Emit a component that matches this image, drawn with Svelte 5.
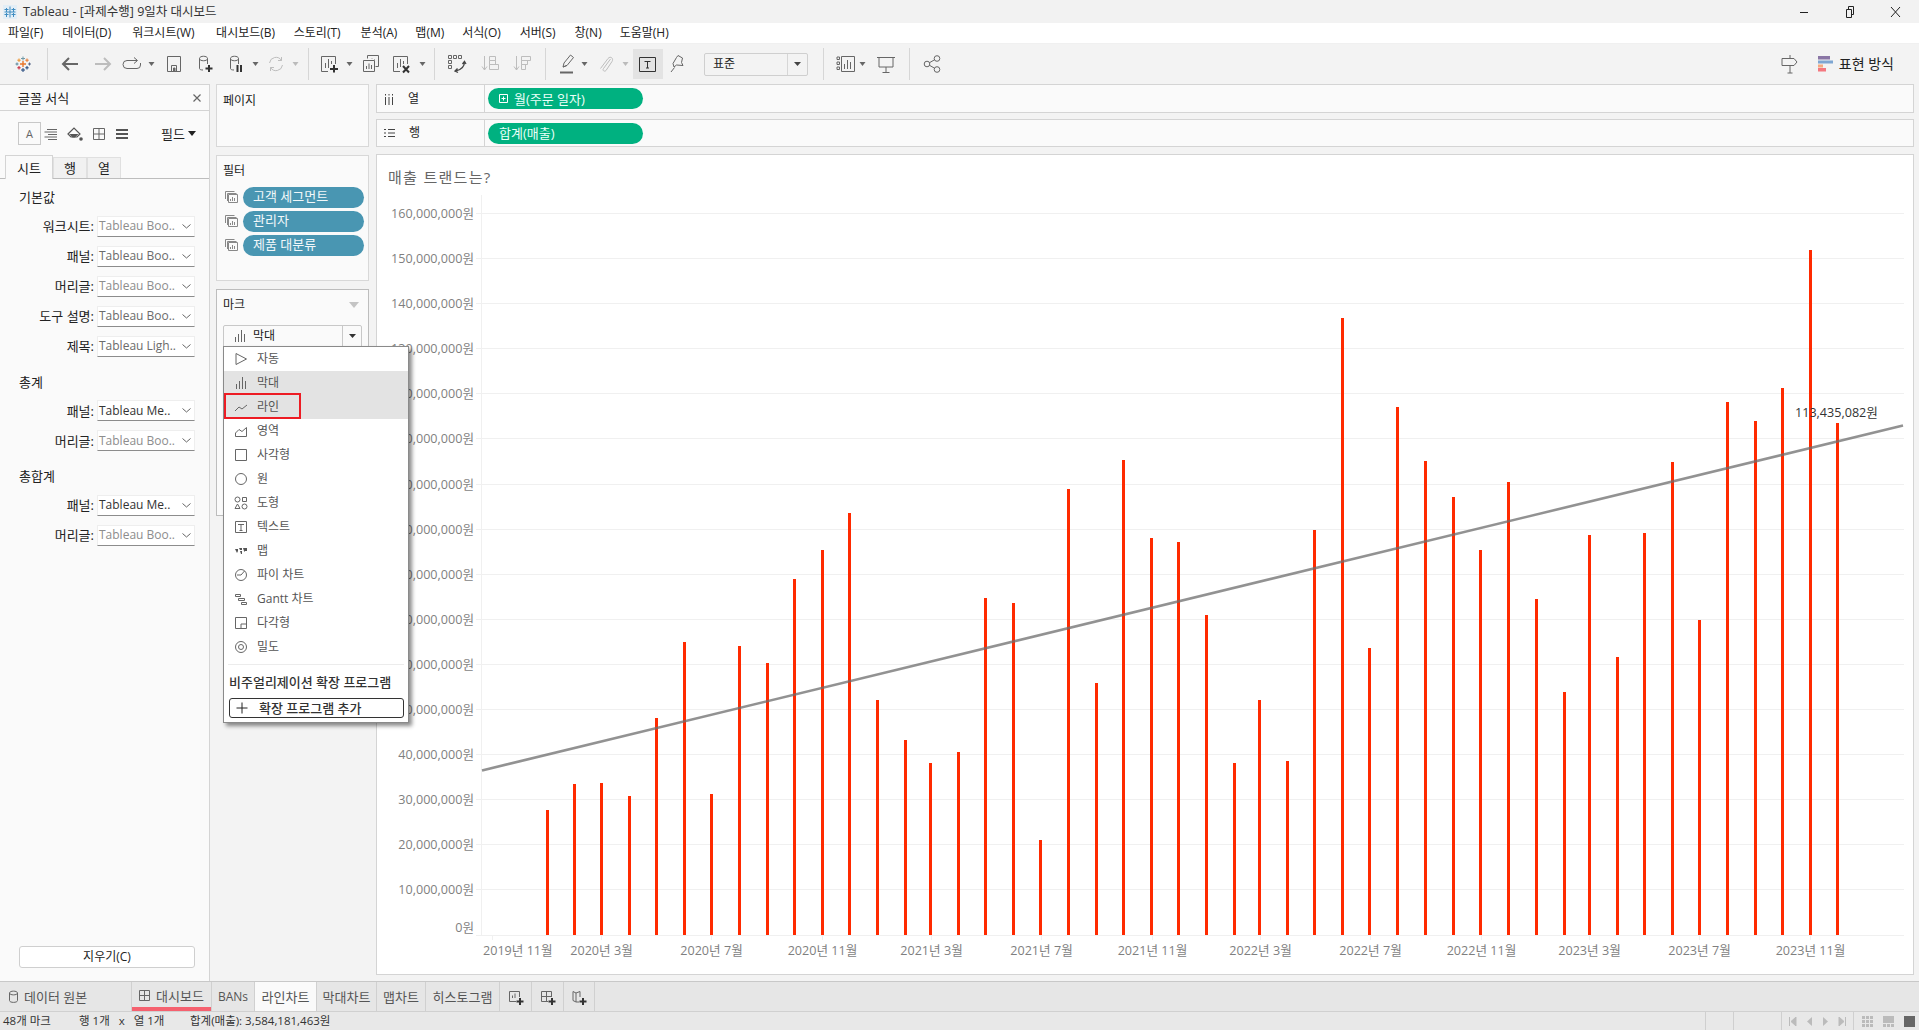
<script>
  const menus = ['파일(F)','데이터(D)','워크시트(W)','대시보드(B)','스토리(T)','분석(A)','맵(M)','서식(O)','서버(S)','창(N)','도움말(H)'];

  // Bar tops of the monthly sales series, Jan 2020 .. Dec 2023 (y in page px)
  const tops = [662,641,640,651,587,525,649,528,542,473,450,419,572,605,624,615,489,493,687,400,558,376,440,443,503,624,572,622,433,260,530,333,377,406,450,394,490,566,437,537,436,378,507,329,344,317,204,346].map(t => t * 1.2233);
  const BASE = 935, PXM = 45.1;
  const dayX = (y, m) => 548 + ((Date.UTC(y, m, 1) - Date.UTC(2020, 0, 1)) / 864e5) * 0.9024;
  const bars = tops.map((t, i) => ({ x: Math.round(dayX(2020 + Math.floor(i / 12), i % 12) - 1.5), y: Math.round(t) }));
  const yTicks = Array.from({ length: 17 }, (_, i) => i).map(i => ({
    y: Math.floor(BASE - i * PXM) + 0.5,
    label: (i * 10000000).toLocaleString('en-US') + '원',
    zero: i === 0
  }));
  const xTicks = [];
  for (let k = 0; k < 13; k++) {
    const mIdx = 10 + k * 4;
    const yr = 2019 + Math.floor(mIdx / 12), mo = mIdx % 12;
    xTicks.push({ x: Math.round(dayX(yr, mo)) + 0.5, label: `${yr}년 ${mo + 1}월` });
  }

  const fmtRows1 = [['워크시트:','Tableau Boo..',0],['패널:','Tableau Boo..',1],['머리글:','Tableau Boo..',0],['도구 설명:','Tableau Boo..',1],['제목:','Tableau Ligh..',1]];
  const fmtRows2 = [['패널:','Tableau Me..',2],['머리글:','Tableau Boo..',0]];

  const toolDefs = () => [
    [23,20,iLogo],[47,1,null],[70,20,iBack],[103,20,iFwd],[131.6,22,iRedo],[152,7,iCaret],[174,20,iSave],
    [205,20,iDbPlus],[236,20,iDbPause],[256,7,iCaret],[275.6,20,iRefresh],[296,7,iCaretL],[309,1,null],
    [329,20,iSheetPlus],[350,7,iCaret],[371,20,iDup],[401,20,iSheetX],[422.5,7,iCaret],[435,1,null],
    [457,20,iSwap],[490,20,iSortA],[522,20,iSortD],[545.6,1,null],[567,20,iPen],[585,7,iCaret],[606,20,iClip],[626,7,iCaretL],
    [648,30,iT],[677,20,iPin]
  ];
  const toolDefs2 = () => [[823.6,1,null],[846,20,iShowMe],[863,7,iCaret],[886,20,iPresent],[910,1,null],[932,20,iShare]];
  function place(list, start) {
    let right = start;
    return list.map(([c, w, icon]) => {
      const ml = c - w / 2 - right;
      right = c + w / 2;
      return { ml, w, icon };
    });
  }
  const tools = place(toolDefs(), 0);
  const tools2 = place(toolDefs2(), 808);
</script>

{#snippet iLogo()}
  <svg width="20" height="20" viewBox="0 0 20 20">
    <path d="M10 7v6M7 10h6" stroke="#e8762b" stroke-width="1.400"/>
    <path d="M10 2.500v4M8 4.500h4" stroke="#7199a6"/>
    <path d="M10 14v4M8 16h4" stroke="#1f447b"/>
    <path d="M4 8.500v3M2.500 10h3" stroke="#5b879b"/>
    <path d="M16.500 8.500v3M15 10h3" stroke="#5a6b8c"/>
    <path d="M6 4.500v3.500M4.300 6.200h3.400" stroke="#eb912b"/>
    <path d="M14 4.500v3.500M12.300 6.200h3.400" stroke="#e8762b"/>
    <path d="M6 12v3.500M4.300 13.800h3.400" stroke="#c72035"/>
    <path d="M14 12v3.500M12.300 13.800h3.400" stroke="#1f447b"/>
  </svg>
{/snippet}
{#snippet iBack()}<svg width="20" height="20" viewBox="0 0 20 20" class="st2"><path d="M18 10H3M9 4l-6 6 6 6"/></svg>{/snippet}
{#snippet iFwd()}<svg width="20" height="20" viewBox="0 0 20 20" class="st2 off"><path d="M2 10h15M11 4l6 6-6 6"/></svg>{/snippet}
{#snippet iRedo()}<svg width="22" height="20" viewBox="0 0 22 20" class="st"><path d="M16 6.500H6a3.500 3.500 0 0 0 0 8h10a3.500 3.500 0 0 0 3.500-3.500V9"/><path d="M13 3.500l3.500 3-3.500 3"/></svg>{/snippet}
{#snippet iCaret()}<svg width="7" height="4" viewBox="0 0 7 4"><path d="M0.500 0h6L3.500 4z" fill="#666"/></svg>{/snippet}
{#snippet iCaretL()}<svg width="7" height="4" viewBox="0 0 7 4"><path d="M0.500 0h6L3.500 4z" fill="#bbb"/></svg>{/snippet}
{#snippet iSave()}<svg width="20" height="20" viewBox="0 0 20 20" class="st"><path d="M3.500 2.500h13v15h-13z"/><path d="M7.500 17v-5.500h5V17"/><path d="M9.500 14h1.500v3h-1.500z" fill="#666"/></svg>{/snippet}
{#snippet iDbPlus()}<svg width="20" height="20" viewBox="0 0 20 20" class="st"><path d="M4.500 4.500v10c0 1 1.500 1.500 3.500 1.500M4.500 4.500c0-3 8-3 8 0s-8 3-8 0M12.500 4.500V10"/><path d="M14 11v7M10.500 14.500h7" class="dk"/></svg>{/snippet}
{#snippet iDbPause()}<svg width="20" height="20" viewBox="0 0 20 20" class="st"><path d="M4.500 4.500v10c0 1 1.500 1.500 3.500 1.500M4.500 4.500c0-3 8-3 8 0s-8 3-8 0M12.500 4.500V10"/><path d="M11.500 11v7M15 11v7" class="dk"/></svg>{/snippet}
{#snippet iRefresh()}<svg width="20" height="20" viewBox="0 0 20 20" class="st off"><path d="M3.500 9a6.500 6.500 0 0 1 12-2.500M16.500 11a6.500 6.500 0 0 1-12 2.500"/><path d="M15.500 3v3.500H12M4.500 17v-3.500H8"/></svg>{/snippet}
{#snippet iSheetPlus()}<svg width="20" height="20" viewBox="0 0 20 20" class="st"><path d="M9 17.500H2.500v-15h14V10"/><path d="M6.500 14V9M9.500 14V5M12.500 10V7" /><path d="M15 11v7.500M11 15h8" class="dk"/></svg>{/snippet}
{#snippet iDup()}<svg width="20" height="20" viewBox="0 0 20 20" class="st"><path d="M6.500 4.500V1.500h11v11h-3"/><path d="M2.500 6.500h11v11h-11z"/><path d="M5.500 15v-3M8 15V9.500M10.500 15v-4M11 4.500V4M13.500 5.500V5" /></svg>{/snippet}
{#snippet iSheetX()}<svg width="20" height="20" viewBox="0 0 20 20" class="st"><path d="M9 17.500H2.500v-15h14V10"/><path d="M6.500 14V9M9.500 13V5M12.500 10V7"/><path d="M12 12l6 6.500M18 12l-6 6.500" class="dk"/></svg>{/snippet}
{#snippet iSwap()}<svg width="20" height="20" viewBox="0 0 20 20" class="st"><path d="M1.500 1.500h3v3h-3zM6.500 1.500h3v3h-3zM11.500 1.500h3v3h-3zM1.500 6.500h3v3h-3zM1.500 11.500h3v3h-3z"/><path d="M17.500 8c0 4-2 7.500-9 9M15.500 10l2-2.500 1.500 2.500M10.500 14.500l-2.500 2.500 3 1.500" class="md"/></svg>{/snippet}
{#snippet iSortA()}<svg width="20" height="20" viewBox="0 0 20 20" class="st off"><path d="M4.500 2v14M2 12.500l2.500 3.500 2.500-3.500" /><path d="M9.500 2.500h6v4h-6zM9.500 6.500h6v4h-6zM9.500 10.500h9v5h-9z"/></svg>{/snippet}
{#snippet iSortD()}<svg width="20" height="20" viewBox="0 0 20 20" class="st off"><path d="M4.500 2v14M2 12.500l2.500 3.500 2.500-3.500"/><path d="M9.500 2.500h9v4h-9zM9.500 6.500h6v4h-6zM9.500 10.500h4v5h-4z"/></svg>{/snippet}
{#snippet iPen()}<svg width="20" height="22" viewBox="0 0 20 22" class="st"><path d="M6 14l1-4 6.500-8 3 2.500-6.500 8z"/><path d="M6 14l4-1.700"/><path d="M3 18.500h13v2H3z" fill="#666" stroke="none"/></svg>{/snippet}
{#snippet iClip()}<svg width="20" height="20" viewBox="0 0 20 20" class="st off"><path d="M14.500 5l-7 9.500c-1.500 2 1 3.500 2.500 2l6-9c2-3-1.500-6-4-3l-7.500 10"/></svg>{/snippet}
{#snippet iT()}<span class="tbtn"><svg width="17" height="15" viewBox="0 0 17 15" class="st dkst"><path d="M0.500 0.500h16v14h-16z"/><path d="M5.500 4.500h6M8.500 4.500v6.500M7 11h3"/></svg></span>{/snippet}
{#snippet iPin()}<svg width="20" height="20" viewBox="0 0 20 20" class="st"><path d="M11 1.500l4.500 2.500-1 4.500 1.500 3-6.500-.5-2.500 2-1-3.500 3.500-6z"/><path d="M7.500 13.500L4 18"/></svg>{/snippet}
{#snippet iShowMe()}<svg width="20" height="20" viewBox="0 0 20 20" class="st"><path d="M5.500 2.500h13v15h-13z"/><path d="M8.500 15v-5M11.500 15V6M14.500 15v-7" class="th"/><path d="M1 3h2.500v2.500H1zM1 8h2.500v2.500H1zM1 13h2.500v2.500H1z"/></svg>{/snippet}
{#snippet iPresent()}<svg width="20" height="20" viewBox="0 0 20 20" class="st"><path d="M1 3.500h18M3 3.500v9.500h14V3.500M10 13v5M6.500 18.500h7"/></svg>{/snippet}
{#snippet iShare()}<svg width="20" height="20" viewBox="0 0 20 20" class="st"><circle cx="5" cy="10" r="2.800"/><circle cx="15" cy="4.500" r="2.800"/><circle cx="15" cy="15.500" r="2.800"/><path d="M7.500 8.700l5-2.900M7.500 11.300l5 2.900"/></svg>{/snippet}
{#snippet iBars()}<svg width="14" height="14" viewBox="0 0 14 14" class="st"><path d="M2.500 13V8M5.500 13V5M8.500 13V1M11.500 13V5"/></svg>{/snippet}
{#snippet iFilter()}<svg width="13" height="12" viewBox="0 0 13 12" class="st soft"><path d="M0.500 8V0.500h9M2.500 10V2.500h9"/><path d="M3.500 11.500h9v-8h-9z"/><path d="M5.500 10V8M7.500 10V6M9.500 10V7"/></svg>{/snippet}

<div class="app">
  <div class="title">
    <svg width="14" height="14" viewBox="0 0 14 14" class="tlogo"><rect width="14" height="14" fill="#e3eef6" stroke="none"/><path d="M7 1.500v11M1.500 7h11M3.500 3v4M1.500 4.500h4M10.500 3v4M8.500 4.500h4M3.500 8v4M1.500 9.500h4M10.500 8v4M8.500 9.500h4"/></svg>
    <span class="ttext">Tableau - [과제수행] 9일차 대시보드</span>
    <div class="win">
      <svg width="10" height="10" viewBox="0 0 10 10"><path d="M1 5.500h8" stroke="#222"/></svg>
      <svg width="10" height="14" viewBox="0 0 10 14"><path d="M1.500 4.500h5v8h-5zM3.500 4V1.500h5v8H7" stroke="#222" fill="none"/></svg>
      <svg width="11" height="12" viewBox="0 0 11 12"><path d="M1 1l9 10M10 1L1 11" stroke="#222" fill="none"/></svg>
    </div>
  </div>

  <nav class="menu">
    {#each menus as m}<span>{m}</span>{/each}
  </nav>

  <div class="toolbar">
    {#each tools as t}
      <span class="cell" class:sep={!t.icon} style="margin-left:{t.ml}px;width:{t.w}px">{#if t.icon}{@render t.icon()}{/if}</span>
    {/each}
    <span class="combo"><span>표준</span><span class="combo-c"><svg width="7" height="4" viewBox="0 0 7 4"><path d="M0 0h7L3.500 4z" fill="#444"/></svg></span></span>
    {#each tools2 as t}
      <span class="cell" class:sep={!t.icon} style="margin-left:{t.ml}px;width:{t.w}px">{#if t.icon}{@render t.icon()}{/if}</span>
    {/each}
    <span class="tb-right">
      <svg width="20" height="20" viewBox="0 0 20 20" class="st"><path d="M10 1v3M2 4.500h12l3 3.500-3 3.500H2zM10 11.500V19M7.500 19h5"/></svg>
      <span class="howto">
        <svg width="15" height="16" viewBox="0 0 15 16"><rect x="0" y="0" width="12" height="3.500" fill="#8a76a5"/><rect x="0" y="4.500" width="15" height="3" fill="#7ea6d2"/><rect x="0" y="8.500" width="5" height="3" fill="#f5a97f"/><rect x="0" y="12" width="8" height="3.500" fill="#f4777f"/></svg>
        표현 방식
      </span>
    </span>
  </div>

  <main class="body">
    <aside class="fmt">
      <header class="fmt-head"><span>글꼴 서식</span><svg width="10" height="10" viewBox="0 0 10 10"><path d="M1.500 1.500l7 7M8.500 1.500l-7 7" stroke="#666" stroke-width="1.200"/></svg></header>
      <div class="fmt-tools">
        <span class="a-box">A</span>
        <svg width="14" height="14" viewBox="0 0 14 14" class="st"><path d="M3 2.500h10M0.500 5h12.500M4 7.500h9M0.500 10h12.500M4 12.500h9"/></svg>
        <svg width="16" height="16" viewBox="0 0 16 16"><path d="M1 8l6-6 6 6-3 3H4z" fill="none" stroke="#555" stroke-width="1.200"/><path d="M2.500 8h9L8 11.500H5.500z" fill="#555"/><circle cx="14" cy="13" r="1.800" fill="#555"/></svg>
        <svg width="14" height="14" viewBox="0 0 14 14" class="st"><path d="M1.500 1.500h11v11h-11zM7 1.500v11M1.500 7h11"/></svg>
        <svg width="14" height="14" viewBox="0 0 14 14"><path d="M1 2h12v2H1zM1 6h12v2H1zM1 10h12v2H1z" fill="#555"/></svg>
        <span class="field">필드<svg width="8" height="5" viewBox="0 0 8 5"><path d="M0 0h8L4 5z" fill="#222"/></svg></span>
      </div>
      <div class="tabs"><span class="tab on">시트</span><span class="tab">행</span><span class="tab">열</span></div>
      <div class="sec first">기본값</div>
      {#each fmtRows1 as r}
        <div class="frow"><label>{r[0]}</label><span class="sel" class:s1={r[2]===1} class:s2={r[2]===2}>{r[1]}<svg width="9" height="5" viewBox="0 0 9 5"><path d="M0.500 0.500l4 3.500 4-3.500" stroke="#666" fill="none"/></svg></span></div>
      {/each}
      <div class="sec">총계</div>
      {#each fmtRows2 as r}
        <div class="frow"><label>{r[0]}</label><span class="sel" class:s2={r[2]===2}>{r[1]}<svg width="9" height="5" viewBox="0 0 9 5"><path d="M0.500 0.500l4 3.500 4-3.500" stroke="#666" fill="none"/></svg></span></div>
      {/each}
      <div class="sec">총합계</div>
      {#each fmtRows2 as r}
        <div class="frow"><label>{r[0]}</label><span class="sel" class:s2={r[2]===2}>{r[1]}<svg width="9" height="5" viewBox="0 0 9 5"><path d="M0.500 0.500l4 3.500 4-3.500" stroke="#666" fill="none"/></svg></span></div>
      {/each}
      <button class="clear">지우기(C)</button>
    </aside>

    <section class="mid">
      <div class="card pages"><h4>페이지</h4></div>
      <div class="card filters">
        <h4>필터</h4>
        <div class="frow2">{@render iFilter()}<span class="fpill">고객 세그먼트</span></div>
        <div class="frow2">{@render iFilter()}<span class="fpill">관리자</span></div>
        <div class="frow2">{@render iFilter()}<span class="fpill">제품 대분류</span></div>
      </div>
      <div class="card marks">
        <h4>마크<svg width="10" height="6" viewBox="0 0 10 6"><path d="M0 0h10L5 6z" fill="#c4c4c4"/></svg></h4>
        <div class="mtype">{@render iBars()}<span>막대</span><span class="mtype-c"><svg width="7" height="4" viewBox="0 0 7 4"><path d="M0 0h7L3.500 4z" fill="#333"/></svg></span></div>
        <div class="popup">
          <div class="mi"><svg width="14" height="14" viewBox="0 0 14 14" class="st"><path d="M2 1.500L12.500 7 2 12.500z"/></svg><span>자동</span></div>
          <div class="mi hi"><svg width="14" height="14" viewBox="0 0 14 14" class="st"><path d="M2.500 13V8M5.500 13V5M8.500 13V1M11.500 13V5"/></svg><span>막대</span></div>
          <div class="mi hi boxed"><svg width="14" height="14" viewBox="0 0 14 14" class="st"><path d="M1 11l4-4 3 2 5-4"/></svg><span>라인</span></div>
          <div class="mi"><svg width="14" height="14" viewBox="0 0 14 14" class="st"><path d="M1.500 12.500V9L5 5.500l3 2 4.500-4v9z"/></svg><span>영역</span></div>
          <div class="mi"><svg width="14" height="14" viewBox="0 0 14 14" class="st"><path d="M1.500 1.500h11v11h-11z"/></svg><span>사각형</span></div>
          <div class="mi"><svg width="14" height="14" viewBox="0 0 14 14" class="st"><circle cx="7" cy="7" r="5.500"/></svg><span>원</span></div>
          <div class="mi"><svg width="14" height="14" viewBox="0 0 14 14" class="st"><circle cx="3.500" cy="3.500" r="2.500"/><path d="M8.500 1.500h4v4h-4zM3.500 8l2.500 4.500H1z"/><circle cx="10.500" cy="10.500" r="2.500"/></svg><span>도형</span></div>
          <div class="mi"><svg width="14" height="14" viewBox="0 0 14 14" class="st"><path d="M1.500 1.500h11v11h-11zM4 4.500h6M7 4.500v6M5.500 10.500h3"/></svg><span>텍스트</span></div>
          <div class="mi"><svg width="14" height="14" viewBox="0 0 14 14"><path d="M1 5h3v2l-1 2-1-2zM5 4h3v2H6zM6 7h2v3H7zM9 4h4v3h-2v1l-1-1z" fill="#555"/></svg><span>맵</span></div>
          <div class="mi"><svg width="14" height="14" viewBox="0 0 14 14" class="st"><circle cx="7" cy="7" r="5.500"/><path d="M7 7l3.500-4M7 7H3"/></svg><span>파이 차트</span></div>
          <div class="mi"><svg width="14" height="14" viewBox="0 0 14 14" class="st"><path d="M1.500 2.500h5v2h-5zM4.500 6.500h6v2h-6zM7.500 10.500h5v2h-5z"/></svg><span>Gantt 차트</span></div>
          <div class="mi"><svg width="14" height="14" viewBox="0 0 14 14" class="st"><path d="M1.500 1.500h11v11h-11zM7 12.500V8h5.500"/></svg><span>다각형</span></div>
          <div class="mi"><svg width="14" height="14" viewBox="0 0 14 14" class="st"><circle cx="7" cy="7" r="5.500"/><circle cx="7" cy="7" r="2.500"/></svg><span>밀도</span></div>
          <div class="psep"></div>
          <div class="pext">비주얼리제이션 확장 프로그램</div>
          <div class="padd"><svg width="12" height="12" viewBox="0 0 12 12"><path d="M6 0.500v11M0.500 6h11" stroke="#222"/></svg><span>확장 프로그램 추가</span></div>
        </div>
      </div>
    </section>

    <section class="right">
      <div class="shelf">
        <div class="shelf-l"><svg width="10" height="12" viewBox="0 0 10 12"><path d="M1.500 4v8M5 4v8M8.500 4v8M1.500 1v1.500M5 1v1.500M8.500 1v1.500" stroke="#444"/></svg><span>열</span></div>
        <div class="spill"><svg width="9" height="9" viewBox="0 0 9 9"><path d="M0.500 0.500h8v8h-8zM2.500 4.500h4M4.500 2.500v4" stroke="#fff" fill="none"/></svg>월(주문 일자)</div>
      </div>
      <div class="shelf s2nd">
        <div class="shelf-l"><svg width="11" height="10" viewBox="0 0 11 10"><path d="M0 1.500h2M4 1.500h7M0 5h2M4 5h7M0 8.500h2M4 8.500h7" stroke="#444"/></svg><span>행</span></div>
        <div class="spill">합계(매출)</div>
      </div>
      <div class="chart">
        <div class="ctitle">매출 트랜드는?</div>
        <svg class="plot" width="1535" height="779" viewBox="378 195 1535 779">
          <line x1="482.500" x2="482.500" y1="195" y2="935" class="grid"/>
          {#each yTicks as t}
            <line x1="477" x2="1905" y1={t.y} y2={t.y} class="grid"/>
            <text x="475" y={t.zero ? BASE - 8 : t.y} class="yl">{t.label}</text>
          {/each}
          {#each xTicks as t, i}
            <line x1={t.x} x2={t.x} y1="935" y2="940" class="grid"/>
            <text x={i === 0 ? 484 : t.x} y="950" class="xl" class:first={i === 0}>{t.label}</text>
          {/each}
          {#each bars as b}
            <rect x={b.x} y={b.y} width="3" height={BASE - b.y} class="bar"/>
          {/each}
          <line x1="483" y1="770.500" x2="1904" y2="425.500" class="trend"/>
          <text x="1796" y="412" class="ann">113,435,082원</text>
        </svg>
      </div>
    </section>
  </main>

  <div class="sheets">
    <span class="st-src"><svg width="9" height="13" viewBox="0 0 9 13" class="st"><path d="M0.500 3v7.500c0 2.500 8 2.500 8 0V3M0.500 3c0-2.500 8-2.500 8 0s-8 2.500-8 0"/></svg>데이터 원본</span>
    <span class="st-tab dash"><svg width="11" height="11" viewBox="0 0 11 11" class="st"><path d="M0.500 0.500h10v10h-10zM5.500 0.500v10M0.500 5.500h10"/></svg>대시보드</span>
    <span class="st-tab w-ban">BANs</span>
    <span class="st-tab on w-line">라인차트</span>
    <span class="st-tab w-bar">막대차트</span>
    <span class="st-tab w-map">맵차트</span>
    <span class="st-tab w-his">히스토그램</span>
    <span class="st-add"><svg width="16" height="16" viewBox="0 0 16 16" class="st"><path d="M8 12.500H1.500v-10h10V8M4.500 9V6.500M7 9V4.500"/><path d="M12 9v7M8.500 12.500h7" class="dk"/></svg></span>
    <span class="st-add"><svg width="16" height="16" viewBox="0 0 16 16" class="st"><path d="M8 12.500H1.500v-10h10V8M6.500 2.500v10M1.500 7.500h10"/><path d="M12 9v7M8.500 12.500h7" class="dk"/></svg></span>
    <span class="st-add"><svg width="16" height="16" viewBox="0 0 16 16" class="st"><path d="M2 2.500l3 1.500 4-1.500V8M2 2.500v9l3 1.500h3M5 4v9"/><path d="M12 9v7M8.500 12.500h7" class="dk"/></svg></span>
  </div>

  <footer class="status">
    <span class="s-a">48개 마크</span>
    <span class="s-b">행 1개&nbsp;&nbsp; x&nbsp;&nbsp; 열 1개</span>
    <span class="s-c">합계(매출): 3,584,181,463원</span>
    <span class="s-right">
      <i class="bx w27"></i><i class="bx w47"></i>
      <span class="nav">
        <svg width="8" height="9" viewBox="0 0 8 9"><path d="M0.500 0v9M7 0v9L2 4.500z" stroke="#bbb" fill="#bbb"/></svg>
        <svg width="7" height="9" viewBox="0 0 7 9"><path d="M6 0v9L1 4.500z" fill="#bbb"/></svg>
        <svg width="7" height="9" viewBox="0 0 7 9"><path d="M1 0v9l5-4.500z" fill="#bbb"/></svg>
        <svg width="8" height="9" viewBox="0 0 8 9"><path d="M7.500 0v9M1 0v9l5-4.500z" stroke="#bbb" fill="#bbb"/></svg>
      </span>
      <span class="views">
        <svg width="11" height="11" viewBox="0 0 11 11"><path d="M0 0h3v3H0zM4 0h3v3H4zM8 0h3v3H8zM0 4h3v3H0zM4 4h3v3H4zM8 4h3v3H8zM0 8h3v3H0zM4 8h3v3H4zM8 8h3v3H8z" fill="#bbb"/></svg>
        <svg width="11" height="11" viewBox="0 0 11 11"><path d="M0 0h11v7H0zM0 8h3v3H0zM4 8h3v3H4zM8 8h3v3H8z" fill="#bbb"/></svg>
        <svg width="11" height="11" viewBox="0 0 11 11"><path d="M0 0h11v11H0z" fill="#666"/></svg>
      </span>
    </span>
  </footer>
</div>

<style>
  :global(body) { margin: 0; background: #f3f3f3; overflow: hidden; }
  .app {
    width: 1919px; height: 1030px; display: grid;
    grid-template-rows: 23px 20px 41px 897px 30px 19px;
    font: 12px/16px "Open Sans", "Noto Sans CJK KR", sans-serif; color: #222;
    overflow: hidden;
  }
  svg { display: block; flex: none; }
  .st { fill: none; stroke: #666; stroke-width: 1; }
  .st .dk { stroke: #333; stroke-width: 2; }
  .st .md { stroke: #444; stroke-width: 1.300; }
  .st .th { stroke-width: 1; stroke: #666; }
  .st.off { stroke: #bdbdbd; }
  .st.soft { stroke: #888; }
  .st.dkst { stroke: #333; }
  .st2 { fill: none; stroke: #666; stroke-width: 2; }
  .st2.off { stroke: #bdbdbd; }

  .title { background: #f2f2f2; display: flex; align-items: center; padding: 0 0 0 3px; gap: 6px; }
  .tlogo { fill: none; stroke: #3f8dc2; stroke-width: 1; }
  .ttext { font-size: 12.500px; color: #333; }
  .win { margin-left: auto; display: flex; align-items: center; gap: 35.500px; padding-right: 18px; }

  .menu { background: #fff; display: flex; align-items: center; padding-left: 8px; }
  .menu span:nth-child(1) { margin-right: 19px; }
  .menu span:nth-child(2) { margin-right: 21px; }
  .menu span:nth-child(3) { margin-right: 21.500px; }
  .menu span:nth-child(4) { margin-right: 18.700px; }
  .menu span:nth-child(5) { margin-right: 20px; }
  .menu span:nth-child(6) { margin-right: 18px; }
  .menu span:nth-child(7) { margin-right: 18px; }
  .menu span:nth-child(8) { margin-right: 19px; }
  .menu span:nth-child(9) { margin-right: 19px; }
  .menu span:nth-child(10) { margin-right: 18px; }

  .toolbar { background: #f3f3f3; display: flex; align-items: center; border-top: 1px solid #f0f0f0; }
  .cell { display: flex; align-items: center; justify-content: center; height: 30px; flex: none; }
  .cell.sep { background: #d6d6d6; height: 32px; }
  .tbtn { width: 30px; height: 30px; background: #e3e3e3; display: flex; align-items: center; justify-content: center; flex: none; }
  .combo {
    margin-left: 17px; width: 104px; height: 23px; box-sizing: border-box; border: 1px solid #cfcfcf; border-radius: 2px;
    background: #f3f3f3; display: flex; align-items: center; padding-left: 8px; flex: none;
  }
  .combo-c { margin-left: auto; width: 19px; height: 100%; border-left: 1px solid #d6d6d6; display: flex; align-items: center; justify-content: center; }
  .tb-right { margin-left: auto; display: flex; align-items: center; gap: 18px; padding-right: 25px; }
  .howto { display: flex; align-items: center; gap: 6px; font-size: 14px; }

  .body { display: flex; min-height: 0; position: relative; }
  .fmt {
    width: 210px; box-sizing: border-box; background: #fafafa; border-right: 1px solid #d4d4d4;
    display: flex; flex-direction: column; flex: none;
  }
  .fmt-head { height: 27px; box-sizing: border-box; border-bottom: 1px solid #d4d4d4; border-top: 1px solid #d4d4d4; display: flex; align-items: center; justify-content: space-between; padding: 0 7px 0 18px; font-size: 13px; }
  .fmt-tools { height: 45px; box-sizing: border-box; display: flex; align-items: center; gap: 9px; padding: 0 0 0 18px; }
  .a-box { width: 21px; height: 21px; border: 1px solid #c8c8c8; display: flex; align-items: center; justify-content: center; font-size: 11px; color: #666; flex: none; margin-right: -6px; }
  .field { margin-left: auto; margin-right: 13px; display: flex; align-items: center; gap: 3px; font-size: 13px; }
  .tabs { height: 23px; box-sizing: border-box; display: flex; border-bottom: 1px solid #bdbdbd; padding-left: 5px; align-items: flex-end; }
  .tab { width: 34px; height: 21px; box-sizing: border-box; background: #f1f1f1; border: 1px solid #e0e0e0; border-bottom: 0; display: flex; align-items: center; justify-content: center; font-size: 13px; }
  .tab.on { width: 48px; height: 24px; background: #fafafa; border-color: #d4d4d4; margin-bottom: -1px; }
  .sec { font-size: 13px; padding-left: 19px; height: 24px; line-height: 20px; margin-top: 10.500px; }
  .sec.first { margin-top: 8px; }
  .frow { height: 30px; display: flex; align-items: center; justify-content: flex-end; padding-right: 14px; gap: 3px; }
  .frow label { font-size: 13px; }
  .sel {
    width: 98px; height: 21px; box-sizing: border-box; background: #fff; border: 1px solid #eee; border-bottom: 1px solid #8c8c8c;
    display: flex; align-items: center; justify-content: space-between; padding: 0 3px 0 1px; color: #8d8d8d; font-size: 12px;
  }
  .sel.s1 { color: #6b6b6b; }
  .sel.s2 { color: #333; }
  .clear {
    margin: auto 14px 13px 19px; height: 22px; box-sizing: border-box; border: 1px solid #cfcfcf; border-radius: 3px; background: #fff;
    font: inherit; color: #222; padding: 0;
  }

  .mid { width: 153px; margin-left: 6px; display: flex; flex-direction: column; gap: 8px; flex: none; }
  .card { box-sizing: border-box; background: #fafafa; border: 1px solid #d8d8d8; padding: 7px 5px 0 6px; }
  .card h4 { margin: 0; font-size: 12px; font-weight: 400; line-height: 18px; display: flex; align-items: center; justify-content: space-between; }
  .pages { height: 63px; }
  .filters { height: 126px; padding-top: 6px; }
  .marks { height: 227px; border-color: #bdbdbd; position: relative; padding-top: 6px; }
  .frow2 { display: flex; align-items: center; gap: 5px; height: 24px; padding-left: 2px; }
  .frow2:nth-of-type(1) { margin-top: 5px; }
  .fpill { flex: 1; height: 21px; border-radius: 11px; background: #4996b2; color: #f2f8fa; font-size: 13px; line-height: 18px; padding-left: 10px; margin-right: -1px; }
  .marks h4 svg { margin-right: 4px; }
  .mtype { margin-top: 11px; width: 139px; height: 22px; box-sizing: border-box; border: 1px solid #c8c8c8; border-radius: 2px 2px 0 0; display: flex; align-items: center; gap: 6px; padding-left: 9px; background: #fafafa; }
  .mtype-c { margin-left: auto; width: 18px; height: 100%; border-left: 1px solid #c8c8c8; display: flex; align-items: center; justify-content: center; }
  .popup {
    position: absolute; left: 6px; top: 56px; width: 186px; height: 377px; box-sizing: border-box;
    background: #fff; border: 1px solid #8a8a8a; box-shadow: 3px 3px 4px rgba(0,0,0,.45); z-index: 5;
  }
  .mi { height: 24px; display: flex; align-items: center; padding-left: 10px; gap: 9px; box-sizing: border-box; color: #555; }
  .mi.hi { background: #e3e3e3; }
  .mi.boxed { position: relative; }
  .mi.boxed::after { content: ""; position: absolute; left: 0; top: -2px; width: 77px; height: 26px; box-sizing: border-box; border: 2px solid #ed1c24; }
  .psep { height: 1px; background: #ececec; margin: 5px 4px 0; }
  .pext { padding-left: 5px; margin-top: 9px; line-height: 16px; font-size: 13px; font-weight: 500; color: #333; }
  .padd { margin: 8px 4px 0 5px; height: 20px; box-sizing: border-box; border: 1px solid #333; border-radius: 3px; display: flex; align-items: center; gap: 11px; padding-left: 6px; font-size: 13px; font-weight: 500; color: #333; }

  .right { flex: 1; margin: 0 5px 6px 7px; display: flex; flex-direction: column; min-width: 0; }
  .shelf { height: 29px; box-sizing: border-box; background: #fafafa; border: 1px solid #d4d4d4; display: flex; align-items: center; flex: none; }
  .s2nd { margin-top: 6px; height: 28px; }
  .shelf-l { width: 108px; height: 100%; box-sizing: border-box; border-right: 1px solid #d4d4d4; display: flex; align-items: center; gap: 14px; padding-left: 7px; flex: none; }
  .spill { margin-left: 3px; width: 155px; height: 21px; border-radius: 11px; background: #00b180; color: #eafff8; display: flex; align-items: center; gap: 6px; padding-left: 11px; box-sizing: border-box; font-size: 13px; }
  .chart { margin-top: 7px; flex: 1; min-height: 0; background: #fff; border: 1px solid #d4d4d4; position: relative; }
  .ctitle { height: 40px; line-height: 44px; padding-left: 11px; font-size: 15px; letter-spacing: 1.300px; color: #666; }
  .grid { stroke: #f0f0f0; stroke-width: 1; }
  .yl { font-size: 12.600px; fill: #7f7f7f; text-anchor: end; dominant-baseline: central; }
  .xl { font-size: 12.600px; fill: #7f7f7f; text-anchor: middle; dominant-baseline: central; }
  .xl.first { text-anchor: start; }
  .ann { font-size: 12.600px; fill: #333; dominant-baseline: central; }
  .bar { fill: #ff2a00; }
  .trend { stroke: #6e6e6e; stroke-opacity: .75; stroke-width: 2.600; }

  .sheets { background: #e6e6e6; border-top: 1px solid #c8c8c8; box-sizing: border-box; display: flex; align-items: stretch; color: #555; font-size: 13px; }
  .st-src { width: 131px; box-sizing: border-box; display: flex; align-items: center; gap: 6px; padding-left: 9px; }
  .st-tab { display: flex; align-items: center; justify-content: center; box-sizing: border-box; border-left: 1px solid #d0d0d0; gap: 6px; }
  .dash { width: 80px; box-shadow: inset 0 -4px 0 #f5616f; padding-bottom: 2px; }
  .w-ban { width: 43px; font-size: 12px; } .w-line { width: 62px; } .w-bar { width: 60px; } .w-map { width: 49px; } .w-his { width: 74px; }
  .st-tab.on { background: #fafafa; }
  .st-add { width: 32px; box-sizing: border-box; border-left: 1px solid #d0d0d0; display: flex; align-items: center; justify-content: center; }
  .st-add:last-child { border-right: 1px solid #d0d0d0; }

  .status { background: #e8e8e8; border-top: 1px solid #d0d0d0; box-sizing: border-box; display: flex; align-items: center; font-size: 11.500px; color: #333; padding-left: 3px; }
  .s-a { width: 76px; } .s-b { width: 111px; }
  .s-right { margin-left: auto; display: flex; align-items: stretch; height: 100%; }
  .bx { display: block; border-left: 1px solid #cfcfcf; }
  .w27 { width: 27px; } .w47 { width: 47px; }
  .nav { border-left: 1px solid #cfcfcf; width: 71px; display: flex; align-items: center; justify-content: center; gap: 9px; }
  .views { border-left: 1px solid #cfcfcf; width: 66px; display: flex; align-items: center; gap: 10px; padding-left: 8px; box-sizing: border-box; }
</style>
